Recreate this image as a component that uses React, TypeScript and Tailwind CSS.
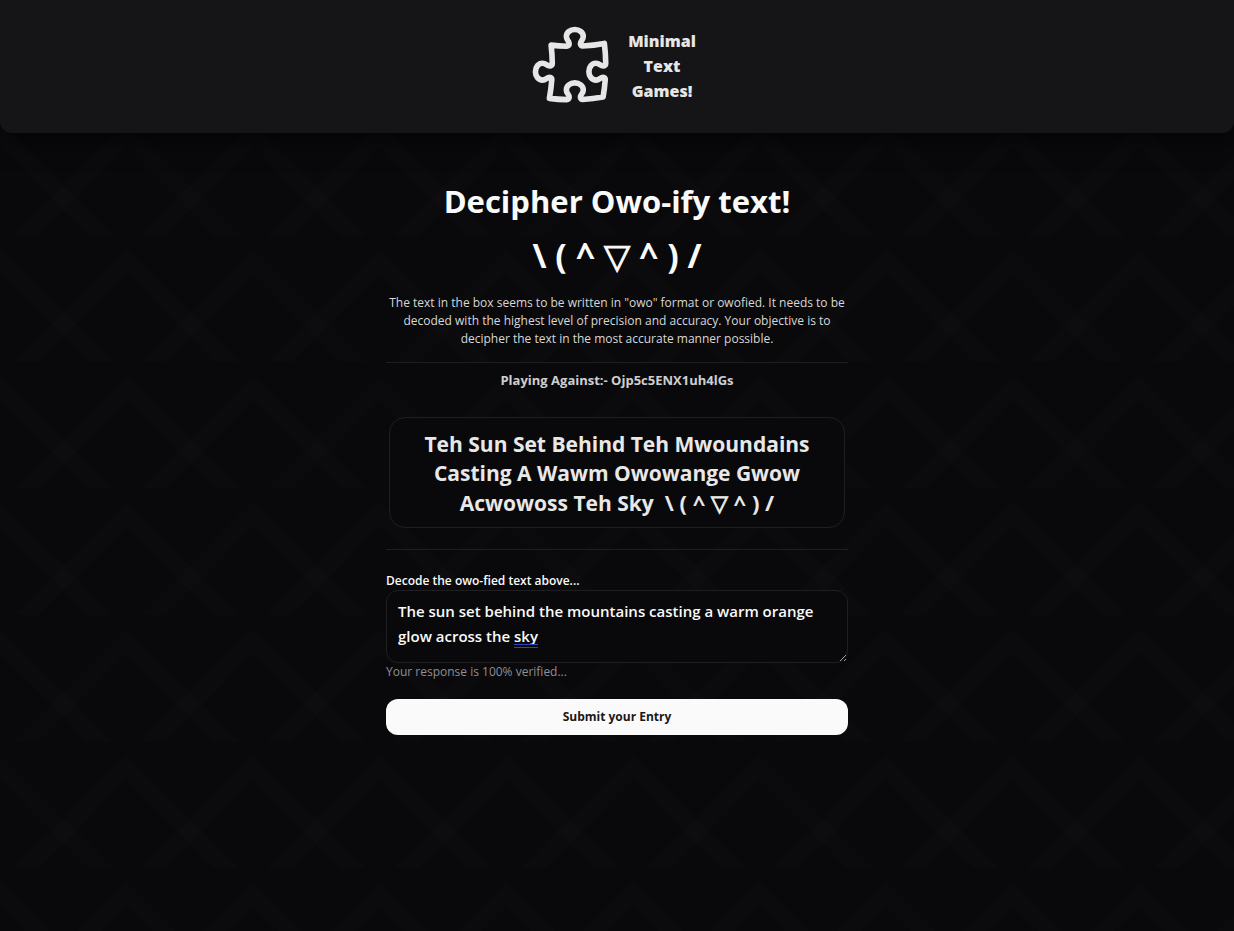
import { HiOutlinePuzzlePiece } from "react-icons/hi2";

function LatticeBackground() {
  return (
    <svg className="pointer-events-none absolute inset-0 size-full" aria-hidden="true">
      <defs>
        <pattern
          id="lattice"
          width="100"
          height="100"
          patternUnits="userSpaceOnUse"
          patternTransform="translate(0 -18) scale(1.266)"
        >
          <path d="M0 11 L89 100 H70 L0 30 Z" fill="#fff" fillOpacity="0.008" />
          <path d="M100 11 L11 100 H30 L100 30 Z" fill="#fff" fillOpacity="0.008" />
        </pattern>
      </defs>
      <rect width="100%" height="100%" fill="url(#lattice)" />
    </svg>
  );
}

function Kaomoji() {
  return (
    <>
      \ ( ^ <span className="[-webkit-text-stroke:1px_currentColor]">▽</span> ^ ) /
    </>
  );
}

function Header() {
  return (
    <header className="relative flex justify-center rounded-b-xl bg-[#161618]/95 pt-[21px] pb-[22px] shadow-[0_10px_24px_rgba(0,0,0,0.5)]">
      <a href="#" className="flex items-center text-[#e6e6e6]">
        <HiOutlinePuzzlePiece className="size-[90px]" aria-hidden="true" />
        <span className="w-[90px] text-center text-base leading-[25px] font-extrabold">
          Minimal Text Games!
        </span>
      </a>
    </header>
  );
}

export default function App() {
  return (
    <div className="relative min-h-screen bg-[#09090b] font-['Open_Sans','Noto_Sans','DejaVu_Sans',sans-serif] text-[#fafafa]">
      <LatticeBackground />
      <Header />
      <main className="relative mx-auto w-full max-w-[462px] pt-[41px] pb-8">
        <h1 className="text-center text-[31px] leading-[54px] font-bold">
          Decipher Owo-ify text!
          <span className="block h-[54px] text-[34px]">
            <Kaomoji />
          </span>
        </h1>
        <p className="mt-3 text-center text-xs leading-[18px] text-[#d8d8d8]">
          The text in the box seems to be written in "owo" format or owofied. It needs to be decoded
          with the highest level of precision and accuracy. Your objective is to decipher the text in
          the most accurate manner possible.
        </p>
        <hr className="mt-[14px] border-[#1f1f21]" />
        <p className="mt-2 text-center text-[13px] leading-[18px] font-bold text-[#cfcfcf]">
          Playing Against:- Ojp5c5ENX1uh4lGs
        </p>
        <div className="mx-[3px] mt-7 rounded-2xl border border-[#1f1f21] bg-[#09090b] px-5 pt-3 pb-[10px] text-center text-[21px] leading-[29px] font-bold text-[#e8e8e8]">
          <p className="h-[87px]">
            Teh Sun Set Behind Teh Mwoundains Casting A Wawm Owowange Gwow Acwowoss Teh Sky &nbsp;
            <span className="text-[22px] whitespace-nowrap">
              <Kaomoji />
            </span>
          </p>
        </div>
        <hr className="mt-[21px] border-[#1f1f21]" />
        <form className="mt-[22px] flex flex-col" onSubmit={(e) => e.preventDefault()}>
          <label htmlFor="answer" className="text-xs leading-[18px] font-semibold">
            Decode the owo-fied text above...
          </label>
          <div className="relative flex">
            <textarea
              id="answer"
              aria-describedby="answer-hint"
              spellCheck={false}
              className="h-[73px] w-full resize-y rounded-xl border border-[#1f1f21] bg-[#09090b] px-[11px] py-2 text-[15px] leading-[25px] font-semibold outline-none"
              defaultValue="The sun set behind the mountains casting a warm orange glow across the sky"
            />
            <span
              className="pointer-events-none absolute top-[54px] left-[128px] h-1 w-6 border-y border-[#2f44c0]"
              aria-hidden="true"
            />
          </div>
          <p id="answer-hint" className="text-xs leading-[18px] text-[#8f8f96]">
            Your response is 100% verified...
          </p>
          <button
            type="submit"
            className="mt-[18px] h-9 rounded-xl bg-[#fafafa] text-xs font-bold text-[#18181b]"
          >
            Submit your Entry
          </button>
        </form>
      </main>
    </div>
  );
}
